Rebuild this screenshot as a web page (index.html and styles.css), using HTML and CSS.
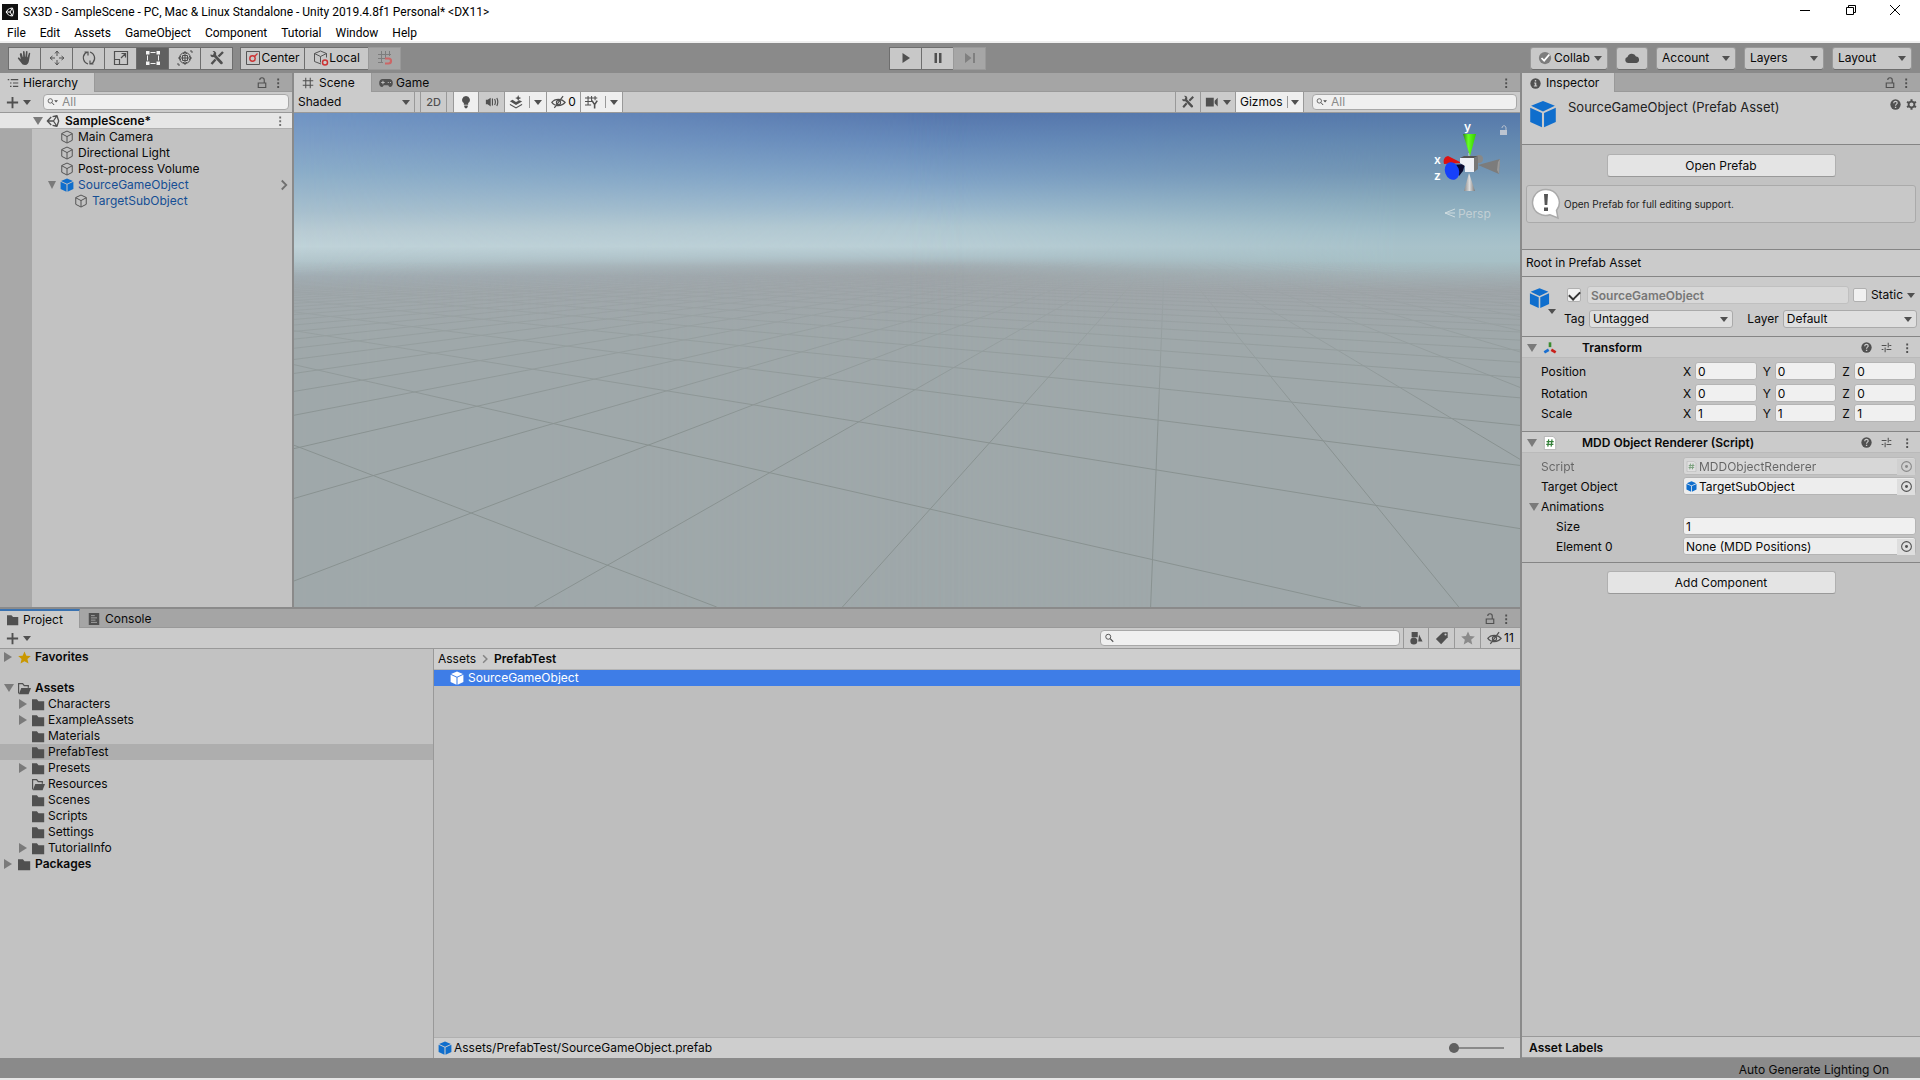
FILE: index.html
```html
<!DOCTYPE html>
<html lang="en">
<head>
<meta charset="utf-8">
<title>SX3D - SampleScene</title>
<link rel="stylesheet" href="styles.css">
</head>
<body>
<svg class="defs" aria-hidden="true">
  <symbol id="unity" viewBox="0 0 16 16"><path d="M6 3.500L1.500 8 6 12.500M1.500 8h7l4-6-5 1M12.500 2l2 6-2 6M8.500 8l4 6-5-1" fill="none" stroke="currentColor" stroke-width="1.500" stroke-linejoin="round"/></symbol>
  <symbol id="hand" viewBox="0 0 16 16"><path d="M3.500 3.200c.8-.3 1.200.2 1.400.9L5.800 7h.4L6 1.800c0-1 1.500-1 1.600 0L8 6.800h.4L9 1.600c.1-1 1.600-.8 1.500.2L10.200 7.200h.4l1.200-4c.3-1 1.700-.5 1.400.4L12 10.500c-.5 2.800-1.500 4.500-4 4.500-2 0-3-.8-4-2.500L1 8.700c-.5-1 .6-1.600 1.300-1l1.500 1.600L2.800 4.400c-.1-.6.2-1 .7-1.200z" fill="currentColor"/></symbol>
  <symbol id="move" viewBox="0 0 16 16"><path d="M8 2v4M8 10v4M2 8h4M10 8h4M6 3.500L8 1l2 2.500M6 12.500L8 15l2-2.500M3.500 6L1 8l2.500 2M12.500 6L15 8l-2.500 2" fill="none" stroke="currentColor"/></symbol>
  <symbol id="rotate" viewBox="0 0 16 16"><path d="M7 14A6.500 6.500 0 0 1 4 3.500L6.500 2M3.500 2H7v3.500M9 2a6.500 6.500 0 0 1 3 10.500L9.500 14M12.500 14H9v-3.500" fill="none" stroke="currentColor" stroke-width="1.200"/></symbol>
  <symbol id="scale" viewBox="0 0 16 16"><path d="M1.500 1.500h13v13h-13zM1.500 9.500h5v5M8 8l4-4M8.500 3.500h4v4" fill="none" stroke="currentColor" stroke-width="1.200"/></symbol>
  <symbol id="rect" viewBox="0 0 16 16"><path d="M5.500 2.500h5M5.500 13.500h5M2.500 5.500v5M13.500 5.500v5" stroke="currentColor" fill="none"/><path d="M1 1h3.500v3.500H1zM11.500 1H15v3.500h-3.500zM1 11.500h3.500V15H1zM11.500 11.500H15V15h-3.500z" fill="currentColor"/></symbol>
  <symbol id="transform-tool" viewBox="0 0 16 16"><circle cx="8" cy="8" r="5.500" fill="none" stroke="currentColor"/><path d="M8 1v14M1 8h14M6 4l2-2 2 2M6 12l2 2 2-2M4 6L2 8l2 2M12 6l2 2-2 2M5.500 5.500h5v5h-5zM1 13v2h2M13 1h2v2" fill="none" stroke="currentColor"/></symbol>
  <symbol id="tools" viewBox="0 0 16 16"><path d="M14 2L9.500 6.500M6.500 9.500L2.500 14" stroke="currentColor" stroke-width="2.400"/><path d="M1.500 4.500L4 5l1-2.500L3.500 1C6 .5 8 2.500 7 5l6.500 7c1 1.500-.5 3-2 2L5 7C3 7.500 1 6.500 1.500 4.500z" fill="currentColor"/></symbol>
  <symbol id="center" viewBox="0 0 16 16"><path d="M1.500 1.500h13v13h-13z" fill="none" stroke="#555"/><circle cx="7.500" cy="8.500" r="2.700" fill="none" stroke="#c33" stroke-width="1.400"/><path d="M9.500 6.500l3-3" stroke="#c33" stroke-width="1.200"/></symbol>
  <symbol id="local" viewBox="0 0 16 16"><path d="M8 14L1.500 11.500v-8L7.500 1l6 2.500v4M1.500 3.500l6 3 6-3M7.500 6.500v6" fill="none" stroke="#555"/><circle cx="12" cy="12.500" r="2.500" fill="#ccc" stroke="#c33" stroke-width="1.500"/></symbol>
  <symbol id="snap" viewBox="0 0 16 16"><path d="M4.500 1v12M8.500 1v7M12.500 1v5M1 4.500h13M1 8.500h7M1 12.500h5" fill="none" stroke="#7d7d7d"/><path d="M8 8.500h3.500a2.500 2.500 0 0 1 0 5H8" fill="none" stroke="#c66" stroke-width="2.200"/></symbol>
  <symbol id="play" viewBox="0 0 16 16"><path d="M4.500 3l7.500 5-7.500 5z" fill="currentColor"/></symbol>
  <symbol id="pause" viewBox="0 0 16 16"><path d="M4.500 3h2.500v10H4.500zM9 3h2.500v10H9z" fill="currentColor"/></symbol>
  <symbol id="step" viewBox="0 0 16 16"><path d="M3 3l6.500 5L3 13zM11 3h2v10h-2z" fill="currentColor"/></symbol>
  <symbol id="check-circle" viewBox="0 0 16 16"><circle cx="8" cy="8" r="7" fill="#7d7d7d"/><path d="M4 8l3 3 6-7" fill="none" stroke="#fff" stroke-width="2"/></symbol>
  <symbol id="cloud" viewBox="0 0 16 16"><path d="M4 13a3 3 0 0 1-.5-5.900A4.500 4.500 0 0 1 12 6.500a3.300 3.300 0 0 1 .5 6.500z" fill="currentColor"/></symbol>
  <symbol id="list" viewBox="0 0 16 16"><path d="M1 3.500h2M5 3.500h10M4 8h2M8 8h7M4 12.500h2M8 12.500h7" stroke="currentColor" stroke-width="1.500"/></symbol>
  <symbol id="lock" viewBox="0 0 16 16"><path d="M3 8h10v6H3zM5 4a3 3 0 0 1 6 0v4" fill="none" stroke="currentColor" stroke-width="1.500"/></symbol>
  <symbol id="kebab" viewBox="0 0 16 16"><path d="M7 2h2.500v2.500H7zM7 7h2.500v2.500H7zM7 12h2.500v2.500H7z" fill="currentColor"/></symbol>
  <symbol id="hash" viewBox="0 0 16 16"><path d="M5 1v14M11 1v14M1 5h14M1 11h14" stroke="currentColor" stroke-width="1.400"/></symbol>
  <symbol id="gamepad" viewBox="0 0 16 16"><path d="M4 3.500h8c2 0 3.800 1.500 3.800 4.500s-1.500 4.500-3.300 4.500c-1 0-1.500-1.500-2-2h-5c-.5.500-1 2-2 2-1.800 0-3.300-1.500-3.300-4.500S2 3.500 4 3.500z" fill="currentColor"/><path d="M2.500 7.500h4M4.500 5.500v4M10 7.500h1.200M12.500 7.500h1.200" stroke="#bbb" stroke-width="1.200"/></symbol>
  <symbol id="plus" viewBox="0 0 16 16"><path d="M8 2v12M2 8h12" stroke="currentColor" stroke-width="2"/></symbol>
  <symbol id="search" viewBox="0 0 16 16"><circle cx="6" cy="6" r="4" fill="none" stroke="currentColor" stroke-width="1.500"/><path d="M9 9l5 5" stroke="currentColor" stroke-width="1.800"/></symbol>
  <symbol id="search-menu" viewBox="0 0 20 16"><circle cx="6" cy="6" r="4" fill="none" stroke="currentColor" stroke-width="1.500"/><path d="M9 9l4 4.500" stroke="currentColor" stroke-width="1.800"/><path d="M13 5h7l-3.500 4z" fill="currentColor"/></symbol>
  <symbol id="cube-line" viewBox="0 0 16 16"><path d="M8 1.200L14 4v7.800L8 14.900 2 11.800V4zM2 4.300l6 3.200 6-3.200M8 7.500v7" fill="none" stroke="#505050" stroke-width="1.100" stroke-linejoin="round"/></symbol>
  <symbol id="cube" viewBox="0 0 16 16"><path d="M8 .5l6.800 2.800L8 6.500 1.200 3.300zM.7 4.400l6.700 3v8.200L.7 12.500zM15.300 4.400l-6.700 3v8.200l6.700-3.100z" fill="currentColor"/></symbol>
  <symbol id="bulb" viewBox="0 0 16 16"><path d="M8 1a4.500 4.500 0 0 1 2.500 8.200V11h-5V9.200A4.500 4.500 0 0 1 8 1zM6 12h4v1.500L9 15H7l-1-1.500z" fill="currentColor"/></symbol>
  <symbol id="audio" viewBox="0 0 16 16"><path d="M1 5.500h2L6.500 3v10L3 10.500H1z" fill="currentColor"/><path d="M8.500 4v8M11 4.500c1 2 1 5 0 7M13.500 3.500c1.500 3 1.500 6 0 9" fill="none" stroke="currentColor" stroke-width="1.300"/></symbol>
  <symbol id="fx" viewBox="0 0 16 16"><path d="M1 7l3-1.500L8 8l4-2 3 1.500-7 4zM1 10l7 4 7-4v1.500L8 15.500 1 11.500z" fill="currentColor"/><path d="M10.500 0l1 2.500L14 3.500l-2.500 1-1 2.500-1-2.500L7 3.500l2.500-1z" fill="currentColor"/></symbol>
  <symbol id="eye-off" viewBox="0 0 18 16"><path d="M1 8.500c3.500-5 12-5 16 0-4 5-12.500 5-16 0zM14.500 1L4 15" fill="none" stroke="currentColor" stroke-width="1.500"/><circle cx="9" cy="8.500" r="2.500" fill="none" stroke="currentColor" stroke-width="1.400"/></symbol>
  <symbol id="grid-y" viewBox="0 0 16 16"><path d="M3.500 1v11M7.500 1v7M11.500 1v5M0 3.500h14M0 7.500h8M0 11.500h7" fill="none" stroke="currentColor" stroke-width="1.200"/><path d="M8 6.500l3 4.500 3-4.500M11 11v4.500" fill="none" stroke="currentColor" stroke-width="1.800"/></symbol>
  <symbol id="camera" viewBox="0 0 16 16"><path d="M1 3h9v10H1zM11 6.500l3.500-3.500v10L11 9.500z" fill="currentColor"/></symbol>
  <symbol id="info" viewBox="0 0 16 16"><circle cx="8" cy="8" r="7.500" fill="currentColor"/><path d="M7 3h2v2H7zM6 6.500h3.200v4.500H10.500v1.500h-5V11H7V8H6z" fill="#cbcbcb"/></symbol>
  <symbol id="help" viewBox="0 0 16 16"><circle cx="8" cy="8" r="7.500" fill="currentColor"/><path d="M5.500 6c0-3.500 5-3 5-.3 0 1.800-2.400 1.800-2.400 4M7.100 12.200h2" fill="none" stroke="#cbcbcb" stroke-width="1.700"/></symbol>
  <symbol id="gear" viewBox="0 0 16 16"><circle cx="8" cy="8" r="4.200" fill="none" stroke="currentColor" stroke-width="2.600"/><path d="M8 .5v3M8 12.500v3M1.500 4.200l2.600 1.500M11.900 10.300l2.600 1.500M1.500 11.800l2.600-1.500M11.900 5.700l2.600-1.500" stroke="currentColor" stroke-width="3"/></symbol>
  <symbol id="preset" viewBox="0 0 16 16"><path d="M1 5h7M12 5h3M10.500 1v7M1 11h2.500M8 11h7M6 8v7" stroke="currentColor" stroke-width="1.500"/></symbol>
  <symbol id="axes" viewBox="0 0 16 16"><path d="M8 7V1.500" stroke="#3a8a2e" stroke-width="3"/><path d="M6.500 10L1.500 13" stroke="#1a6fd0" stroke-width="3"/><path d="M9.500 10l5 3" stroke="#c8201a" stroke-width="3"/></symbol>
  <symbol id="script" viewBox="0 0 16 16"><path d="M1.500.5h10l3 3v12h-13z" fill="#fff" stroke="#b0b0b0"/><path d="M6.500 3.800l-1 8.400M10.300 3.800l-1 8.400M4 6.500h8.200M3.700 9.500h8.200" stroke="#35803a" stroke-width="1.400"/></symbol>
  <symbol id="picker" viewBox="0 0 16 16"><circle cx="8" cy="8" r="6" fill="none" stroke="currentColor" stroke-width="1.300"/><circle cx="8" cy="8" r="1.800" fill="currentColor"/></symbol>
  <symbol id="folder" viewBox="0 0 16 16"><path d="M0 1.500h6l2 2.500h7V15H0z" fill="currentColor"/></symbol>
  <symbol id="folder-open" viewBox="0 0 16 16"><path d="M.7 14V2h5l2 2.500h5V7" fill="none" stroke="currentColor" stroke-width="1.500"/><path d="M4 7.500h12L13 15H1z" fill="currentColor"/></symbol>
  <symbol id="console" viewBox="0 0 16 16"><path d="M1 0h14v16H1z" fill="currentColor"/><path d="M4 3.500h5M4 6.500h8M4 9.500h6M4 12.500h8" stroke="#bbb"/></symbol>
  <symbol id="star" viewBox="0 0 16 16"><path d="M8 .5l2.300 5.200 5.500.5-4.200 3.700 1.300 5.600L8 12.500l-4.900 3 1.300-5.600L.2 6.200l5.500-.5z" fill="currentColor"/></symbol>
  <symbol id="shapes" viewBox="0 0 16 16"><path d="M3 1h7v6H3zM11.500 4l4 8h-5z" fill="currentColor"/><circle cx="5.500" cy="11.500" r="4" fill="currentColor"/></symbol>
  <symbol id="tag" viewBox="0 0 16 16"><path d="M9 1.500h5.500V7L7 15 1 9z" fill="currentColor"/><circle cx="12" cy="4" r="1.200" fill="#ccc"/></symbol>
  <symbol id="chevron" viewBox="0 0 16 16"><path d="M5 2l6 6-6 6" fill="none" stroke="currentColor" stroke-width="2.400"/></symbol>
</svg>

<header class="titlebar">
  <svg class="app-icon" viewBox="0 0 16 16"><path d="M0 0h16v16H0z" fill="#111"/><path d="M7 4.500L4 8l3 3.500M4 8h4l2.500-4-3 .5M10.500 4l1 4-1 4M8 8l2.500 4-3-.5" fill="none" stroke="#fff"/></svg>
  <h1>SX3D - SampleScene - PC, Mac &amp; Linux Standalone - Unity 2019.4.8f1 Personal* &lt;DX11&gt;</h1>
  <div class="window-buttons">
    <button aria-label="Minimize"><svg viewBox="0 0 12 12"><path d="M1 6.500h10" stroke="#000"/></svg></button>
    <button aria-label="Restore"><svg viewBox="0 0 12 12"><path d="M1.500 3.500h7v7h-7zM3.500 3V1.500h7v7H9" fill="none" stroke="#000"/></svg></button>
    <button aria-label="Close"><svg viewBox="0 0 12 12"><path d="M1 1l10 10M11 1L1 11" stroke="#000"/></svg></button>
  </div>
</header>
<nav class="menubar"><button>File</button><button>Edit</button><button>Assets</button><button>GameObject</button><button>Component</button><button>Tutorial</button><button>Window</button><button>Help</button></nav>

<div class="toolbar">
  <div class="toolbar-side">
    <div class="group">
      <button aria-label="Hand"><svg><use href="#hand"/></svg></button><button aria-label="Move"><svg><use href="#move"/></svg></button><button aria-label="Rotate"><svg><use href="#rotate"/></svg></button><button aria-label="Scale"><svg><use href="#scale"/></svg></button><button class="active" aria-label="Rect"><svg><use href="#rect"/></svg></button><button aria-label="Transform"><svg><use href="#transform-tool"/></svg></button><button aria-label="Custom tools"><svg><use href="#tools"/></svg></button>
    </div>
    <div class="group pivots">
      <button><svg><use href="#center"/></svg>Center</button><button><svg><use href="#local"/></svg>Local</button><button class="dim" disabled aria-label="Snap"><svg><use href="#snap"/></svg></button>
    </div>
  </div>
  <div class="group"><button aria-label="Play"><svg><use href="#play"/></svg></button><button aria-label="Pause"><svg><use href="#pause"/></svg></button><button class="dim" disabled aria-label="Step"><svg><use href="#step"/></svg></button></div>
  <div class="toolbar-side right">
    <button class="drop collab"><svg><use href="#check-circle"/></svg>Collab<i class="down"></i></button>
    <button class="drop services" aria-label="Services"><svg><use href="#cloud"/></svg></button>
    <button class="drop">Account<i class="down"></i></button>
    <button class="drop">Layers<i class="down"></i></button>
    <button class="drop">Layout<i class="down"></i></button>
  </div>
</div>

<main class="workspace">
  <div class="left">
    <div class="upper">
      <section class="panel">
        <div class="tabs"><button class="tab on hierarchy-tab"><svg><use href="#list"/></svg>Hierarchy</button><span class="tab-tools"><svg><use href="#lock"/></svg><svg><use href="#kebab"/></svg></span></div>
        <div class="bar"><button class="add" aria-label="Create"><svg><use href="#plus"/></svg><i class="down"></i></button><label class="search"><svg><use href="#search-menu"/></svg><input type="search" placeholder="All" aria-label="Search hierarchy"></label></div>
        <div class="scene-row"><i class="open"></i><svg><use href="#unity"/></svg><b>SampleScene*</b><svg class="end"><use href="#kebab"/></svg></div>
        <ul class="hierarchy">
          <li><i></i><svg><use href="#cube-line"/></svg>Main Camera</li>
          <li><i></i><svg><use href="#cube-line"/></svg>Directional Light</li>
          <li><i></i><svg><use href="#cube-line"/></svg>Post-process Volume</li>
          <li class="prefab"><i class="open"></i><svg class="blue"><use href="#cube"/></svg>SourceGameObject<svg class="end"><use href="#chevron"/></svg></li>
          <li class="prefab child"><i></i><svg><use href="#cube-line"/></svg>TargetSubObject</li>
        </ul>
      </section>
      <section class="panel">
        <div class="tabs"><button class="tab on scene-tab"><svg><use href="#hash"/></svg>Scene</button><button class="tab game-tab"><svg><use href="#gamepad"/></svg>Game</button><span class="tab-tools"><svg><use href="#kebab"/></svg></span></div>
        <div class="bar scene-bar">
          <button class="cell shading">Shaded<i class="down"></i></button>
          <button class="cell two-d">2D</button>
          <button class="cell lit bulb" aria-label="Lighting"><svg><use href="#bulb"/></svg></button><button class="cell" aria-label="Audio"><svg><use href="#audio"/></svg></button><button class="cell lit split" aria-label="Effects"><svg><use href="#fx"/></svg><i class="down"></i></button><button class="cell lit hidden-count"><svg><use href="#eye-off"/></svg>0</button><button class="cell lit split" aria-label="Grid"><svg><use href="#grid-y"/></svg><i class="down"></i></button>
          <span class="space"></span>
          <button class="cell edge" aria-label="Tools"><svg><use href="#tools"/></svg></button><button class="cell cam" aria-label="Camera"><svg><use href="#camera"/></svg><i class="down"></i></button><button class="cell lit split gizmos">Gizmos<i class="down"></i></button>
          <label class="search"><svg><use href="#search-menu"/></svg><input type="search" placeholder="All" aria-label="Search scene"></label>
        </div>
        <div class="viewport">
          <svg class="ground" viewBox="0 0 1226 494" preserveAspectRatio="none">
            <defs>
              <linearGradient id="fade" x1="0" y1="0" x2="0" y2="1"><stop offset=".3" stop-color="#000"/><stop offset=".38" stop-color="#333"/><stop offset=".5" stop-color="#888"/><stop offset=".65" stop-color="#fff"/></linearGradient>
              <mask id="far" maskUnits="userSpaceOnUse" x="0" y="0" width="1226" height="494"><rect width="1226" height="494" fill="url(#fade)"/></mask>
            </defs>
            <path id="grid-lines" mask="url(#far)" fill="none" stroke="#899291"/>
          </svg>
          <svg class="gizmo" viewBox="1430 118 90 104">
            <defs>
              <linearGradient id="green"><stop stop-color="#2a8a10"/><stop offset=".4" stop-color="#6f2"/><stop offset="1" stop-color="#3c0"/></linearGradient>
              <linearGradient id="grey"><stop stop-color="#888"/><stop offset=".5" stop-color="#ddd"/><stop offset="1" stop-color="#777"/></linearGradient>
            </defs>
            <circle cx="1479" cy="159" r="4" fill="#888"/>
            <path d="M1469 157v-4" stroke="#ddd"/>
            <path d="M1463 134h13l-6 22z" fill="url(#green)"/>
            <path d="M1478 165l22-6-1 15z" fill="#7c7c7c"/><path d="M1500 159l-1 15-2-4 1-8z" fill="#999"/>
            <path d="M1469 173l6 18h-11z" fill="url(#grey)"/>
            <path d="M1462 163l-14-7c-4 1-5 4-4 8z" fill="#d11"/>
            <path d="M1465 164l-13 1 7 11 4-5z" fill="#0a0a30"/>
            <path d="M1460 158l4-2h14l-4 2z" fill="#555"/><path d="M1460 158h14v14h-9v-6l-5-3z" fill="#eef0f6"/><path d="M1474 158l4-2v13l-4 3z" fill="#777"/>
            <ellipse cx="1452" cy="171" rx="7" ry="9" transform="rotate(-20 1452 171)" fill="#1640fa"/>
            <g fill="#fff" font-family="Inter, sans-serif" font-size="12" font-weight="600"><text x="1464" y="131">y</text><text x="1434" y="164">x</text><text x="1434" y="180">z</text></g>
            <path d="M1500 130h7v5h-7z" fill="#bcc4d0"/><path d="M1502 128c0-3 4-3 4 0v2" fill="none" stroke="#bcc4d0"/>
            <path d="M1455 209l-10 4 10 4M1445 213h10" fill="none" stroke="#cfdce0"/>
            <text x="1458" y="218" fill="#c2cfd4" font-family="Inter, sans-serif" font-size="12">Persp</text>
          </svg>
        </div>
      </section>
    </div>

    <section class="panel project">
      <div class="tabs"><button class="tab on focus project-tab"><svg><use href="#folder"/></svg>Project</button><button class="tab"><svg><use href="#console"/></svg>Console</button><span class="tab-tools"><svg><use href="#lock"/></svg><svg><use href="#kebab"/></svg></span></div>
      <div class="bar">
        <button class="add" aria-label="Create asset"><svg><use href="#plus"/></svg><i class="down"></i></button>
        <span class="space"></span>
        <label class="search"><svg><use href="#search"/></svg><input type="search" aria-label="Search project"></label>
        <button class="cell edge" aria-label="By type"><svg><use href="#shapes"/></svg></button><button class="cell" aria-label="By label"><svg><use href="#tag"/></svg></button><button class="cell pale" aria-label="Save search"><svg><use href="#star"/></svg></button><button class="cell last"><svg><use href="#eye-off"/></svg>11</button>
      </div>
      <div class="browser">
        <ul class="tree">
          <li class="root first"><i class="shut"></i><svg class="gold"><use href="#star"/></svg>Favorites</li>
          <li class="root"><i class="open"></i><svg><use href="#folder-open"/></svg>Assets</li>
          <li><i class="shut"></i><svg><use href="#folder"/></svg>Characters</li>
          <li><i class="shut"></i><svg><use href="#folder"/></svg>ExampleAssets</li>
          <li><i></i><svg><use href="#folder"/></svg>Materials</li>
          <li class="selected"><i></i><svg><use href="#folder"/></svg>PrefabTest</li>
          <li><i class="shut"></i><svg><use href="#folder"/></svg>Presets</li>
          <li><i></i><svg><use href="#folder-open"/></svg>Resources</li>
          <li><i></i><svg><use href="#folder"/></svg>Scenes</li>
          <li><i></i><svg><use href="#folder"/></svg>Scripts</li>
          <li><i></i><svg><use href="#folder"/></svg>Settings</li>
          <li><i class="shut"></i><svg><use href="#folder"/></svg>TutorialInfo</li>
          <li class="root"><i class="shut"></i><svg><use href="#folder"/></svg>Packages</li>
        </ul>
        <div class="files">
          <nav class="crumbs"><a href="#assets">Assets</a><svg><use href="#chevron"/></svg><b>PrefabTest</b></nav>
          <div class="file"><svg><use href="#cube"/></svg>SourceGameObject</div>
          <div class="path"><svg class="blue"><use href="#cube"/></svg><span>Assets/PrefabTest/SourceGameObject.prefab</span><input type="range" min="0" max="100" value="0" aria-label="Icon size"></div>
        </div>
      </div>
    </section>
  </div>

  <aside class="panel inspector">
    <div class="tabs"><button class="tab on inspector-tab"><svg><use href="#info"/></svg>Inspector</button><span class="tab-tools"><svg><use href="#lock"/></svg><svg><use href="#kebab"/></svg></span></div>
    <div class="asset-head"><svg class="big blue"><use href="#cube"/></svg><h2>SourceGameObject (Prefab Asset)</h2><svg><use href="#help"/></svg><svg><use href="#gear"/></svg></div>
    <div class="open-area">
      <button class="wide">Open Prefab</button>
      <p class="help-box"><svg viewBox="0 0 32 32"><path d="M15 1.500a13 13 0 0 1 10.500 21L27 30l-8-3.300A13 13 0 1 1 15 1.500z" fill="#fff" stroke="#aaa" stroke-width="1.500"/><path d="M13 6h4l-.7 11h-2.600zM13 19.500h4V23h-4z" fill="#555"/></svg>Open Prefab for full editing support.</p>
    </div>
    <div class="root-line">Root in Prefab Asset</div>
    <div class="object-head">
      <div class="object-icon"><svg class="blue"><use href="#cube"/></svg><i class="down"></i></div>
      <div class="object-fields">
        <div class="name-row"><input type="checkbox" checked aria-label="Active"><input class="name" type="text" value="SourceGameObject" disabled aria-label="Name"><input type="checkbox" id="static"><label for="static">Static</label><i class="down"></i></div>
        <div class="tag-row"><label for="tag">Tag</label><span class="select tag-select"><select id="tag"><option>Untagged</option></select></span><label for="layer" class="layer-label">Layer</label><span class="select"><select id="layer"><option>Default</option></select></span></div>
      </div>
    </div>
    <div class="component-head"><i class="open"></i><svg class="component-icon"><use href="#axes"/></svg><b>Transform</b><svg><use href="#help"/></svg><svg><use href="#preset"/></svg><svg><use href="#kebab"/></svg></div>
    <div class="fields transform">
      <div class="row"><span>Position</span><div class="vector"><label for="px">X</label><input id="px" value="0"><label for="py">Y</label><input id="py" value="0"><label for="pz">Z</label><input id="pz" value="0"></div></div>
      <div class="row rotation"><span>Rotation</span><div class="vector"><label for="rx">X</label><input id="rx" value="0"><label for="ry">Y</label><input id="ry" value="0"><label for="rz">Z</label><input id="rz" value="0"></div></div>
      <div class="row"><span>Scale</span><div class="vector"><label for="sx">X</label><input id="sx" value="1"><label for="sy">Y</label><input id="sy" value="1"><label for="sz">Z</label><input id="sz" value="1"></div></div>
    </div>
    <div class="component-head"><i class="open"></i><svg class="component-icon"><use href="#script"/></svg><b>MDD Object Renderer (Script)</b><svg><use href="#help"/></svg><svg><use href="#preset"/></svg><svg><use href="#kebab"/></svg></div>
    <div class="fields renderer">
      <div class="row off"><span>Script</span><div class="object"><svg><use href="#script"/></svg>MDDObjectRenderer<button disabled aria-label="Pick script"><svg><use href="#picker"/></svg></button></div></div>
      <div class="row"><span>Target Object</span><div class="object"><svg class="blue"><use href="#cube"/></svg>TargetSubObject<button aria-label="Pick target"><svg><use href="#picker"/></svg></button></div></div>
      <div class="row fold"><span><i class="open"></i>Animations</span></div>
      <div class="row inner"><label for="size">Size</label><input id="size" value="1"></div>
      <div class="row inner"><span>Element 0</span><div class="object">None (MDD Positions)<button aria-label="Pick element"><svg><use href="#picker"/></svg></button></div></div>
    </div>
    <div class="add-area"><button class="wide">Add Component</button></div>
    <div class="labels">Asset Labels</div>
  </aside>
</main>
<footer class="status">Auto Generate Lighting On</footer>
<div class="desktop-edge"></div>
<script src="grid.js"></script>
</body>
</html>
```
FILE: grid.js
```js
// Ground grid: two families of parallel lines, each meeting at its own point on the horizon.
const horizon = 134, bottom = 494;
const families = [
  { x: 871, start: -0.04, step: 0.856, from: -40, to: 40 },
  { x: -518, start: 2.613, step: 1.79, from: -1, to: 34 }
];
let d = "";
for (const f of families) {
  for (let k = f.from; k <= f.to; k++) {
    const slope = f.start + f.step * k;
    d += `M${f.x} ${horizon}L${(f.x + slope * (bottom - horizon)).toFixed(1)} ${bottom}`;
  }
}
document.getElementById("grid-lines").setAttribute("d", d);
```
FILE: styles.css
```css
* { box-sizing: border-box; }
body { margin: 0; height: 100vh; display: flex; flex-direction: column; overflow: hidden; background: #8a8a8a; color: #090909; font: 12px/16px Inter, sans-serif; }
button, input, select { font: inherit; color: inherit; margin: 0; padding: 0; border: 0; background: none; border-radius: 0; }
input { min-width: 0; outline: 0; }
svg { width: 14px; height: 14px; flex: none; color: #505050; }
ul { margin: 0; padding: 0; list-style: none; }
h1, h2, p { margin: 0; font-weight: 400; }
b { font-weight: 600; }
.defs { display: none; }
.space { flex: 1; }
svg.blue { color: #0f6ecd; }
svg.gold { color: #c99700; }
.down { flex: none; border: 4px solid transparent; border-top: 5px solid #505050; border-bottom: 0; }
.open, .shut { flex: none; border: 5px solid transparent; }
.open { border-top: 8px solid #7a7a7a; border-bottom: 0; }
.shut { border-left: 8px solid #7a7a7a; border-right: 0; }

.titlebar { flex: none; display: flex; align-items: center; height: 23px; background: #fff; padding-left: 2px; gap: 5px; }
.titlebar h1 { flex: 1; font: 12px/16px Roboto, sans-serif; color: #000; }
.app-icon { width: 16px; height: 16px; }
.window-buttons { display: flex; }
.window-buttons button { width: 46px; height: 20px; }
.window-buttons button:last-child { padding-right: 4px; }
.window-buttons svg { width: 12px; height: 12px; }
.menubar { flex: none; display: flex; gap: 14px; height: 20px; padding-left: 7px; background: #fff; border-bottom: 2px solid #f0f0f0; font: 12px/20px Roboto, sans-serif; color: #000; }

.toolbar { flex: none; height: 30px; padding: 0 9px; display: grid; grid-template-columns: minmax(0, 881fr) auto minmax(0, 926fr); align-items: center; background: #8a8a8a; }
.toolbar-side { display: flex; gap: 9px; }
.toolbar-side.right { justify-content: flex-end; gap: 10px; }
.group { display: flex; gap: 1px; }
.group button { width: 31px; height: 21px; display: flex; align-items: center; justify-content: center; background: #c8c8c8; box-shadow: 0 0 0 1px #6e6e6e; }
.group svg { width: 16px; height: 16px; }
.group .active { background: #606060; }
.group .active svg { color: #f4f4f4; }
.group .dim { background: #a6a6a6; box-shadow: 0 0 0 1px #999; }
.group .dim svg { color: #808080; }
.pivots button { width: 63px; }
.pivots .dim { width: 31px; }
.drop { height: 21px; width: 78px; padding: 0 5px; display: flex; align-items: center; justify-content: space-between; background: #c8c8c8; border-radius: 2px; box-shadow: 0 1px 0 #6e6e6e, 0 0 0 1px #999; }
.collab { width: 76px; }
.collab svg { margin: 0 -2px 0 2px; }
.services { width: 30px; justify-content: center; }
.services svg { width: 16px; height: 16px; }

.workspace { flex: 1; min-height: 0; display: grid; grid-template-columns: minmax(0, 1520fr) minmax(0, 398fr); gap: 2px; }
.left { min-height: 0; display: grid; grid-template-rows: minmax(0, 534fr) minmax(0, 449fr); gap: 2px; }
.upper { display: grid; grid-template-columns: minmax(0, 292fr) minmax(0, 1226fr); gap: 2px; min-height: 0; }
.panel { display: flex; flex-direction: column; min-width: 0; min-height: 0; background: #c2c2c2; }
.tabs { flex: none; display: flex; height: 19px; background: #a5a5a5; box-shadow: inset 0 -1px #999; }
.tab { display: flex; align-items: center; gap: 5px; padding: 1px 8px 0; }
.tab svg { width: 12px; height: 12px; }
.tab.on { background: #cbcbcb; border-right: 1px solid #999; }
.tab.focus { border-top: 2px solid #3a72b0; padding-top: 0; }
.hierarchy-tab { width: 95px; gap: 4px; padding: 1px 7px 0; }
.scene-tab { width: 78px; gap: 5px; }
.game-tab { gap: 3px; padding: 1px 7px 0; }
.game-tab svg { width: 14px; height: 14px; }
.project-tab { width: 80px; padding: 0 7px; gap: 4px; }
.inspector-tab { width: 93px; gap: 5px; }
.inspector-tab svg { width: 11px; height: 11px; }
.tab-tools { margin-left: auto; display: flex; align-items: center; gap: 4px; padding-right: 8px; }
.tab-tools svg { width: 12px; height: 12px; }
.bar { flex: none; display: flex; align-items: center; height: 21px; background: #cbcbcb; border-bottom: 1px solid #999; }
.add { display: flex; align-items: center; width: 43px; padding-left: 5px; gap: 3px; }
.add svg { width: 15px; height: 15px; }
.search { flex: 1; min-width: 0; display: flex; align-items: center; height: 16px; margin-right: 3px; padding-left: 3px; border: 1px solid #a8a8a8; border-radius: 4px; background: #f0f0f0; gap: 4px; }
.search svg { width: 11px; height: 10px; }
.search input { flex: 1; height: 14px; line-height: 14px; }
.search input::placeholder { color: #8a8a8a; opacity: 1; }
.cell { flex: none; width: 26px; height: 20px; display: flex; align-items: center; justify-content: center; border-right: 1px solid #999; }
.lit { background: #efefef; }
.edge { border-left: 1px solid #999; }
.pale svg { color: #8a8a8a; }
.shading { width: 121px; padding: 0 4px; justify-content: space-between; }
.two-d { width: 27px; margin: 0 6px 0 5px; border-left: 1px solid #999; color: #505050; font-size: 11px; font-weight: 500; }
.bulb { border-left: 1px solid #999; }
.split { width: 42px; justify-content: space-between; padding: 0 4px; }
.split::before { content: ""; order: 1; height: 12px; border-left: 1px solid #999; margin-left: 2px; }
.split .down { order: 2; }
.hidden-count { width: 34px; }
.hidden-count svg, .last svg { width: 15px; }
.hidden-count svg { margin-right: 2px; }
.cam { width: 35px; gap: 4px; }
.gizmos { width: 68px; padding: 0 4px; }
.scene-bar .search { flex: 0 1 205px; margin-left: 8px; margin-right: 3px; }

.scene-row { flex: none; display: flex; align-items: center; height: 16px; padding: 0 6px 0 33px; background: #e6e6e6; border-bottom: 1px solid #b0b0b0; }
.scene-row svg { margin-left: 3px; margin-right: 5px; }
svg.end { margin: 0 0 0 auto; width: 12px; height: 12px; color: #707070; }
.scene-row .end { margin: 0 0 0 auto; }
.hierarchy { flex: 1; padding-left: 32px; background: linear-gradient(90deg, #a8a8a8 32px, transparent 32px); }
.hierarchy li { display: flex; align-items: center; height: 16px; padding: 0 2px 0 16px; gap: 4px; }
.hierarchy i { width: 8px; border-left-width: 4px; border-right-width: 4px; }
.hierarchy .child { padding-left: 30px; }
.prefab { color: #154e94; }

/* The sky is three vertical ramps (left, middle, right) blended across the view. */
.viewport { flex: 1; min-height: 0; position: relative; overflow: hidden; background: linear-gradient(#5676ad 0, #6387b9 5%, #7094c0 9%, #82a5c8 14%, #9ab8ce 19%, #b0c8d2 23%, #bacfd6 27%, #afc3ca 29%, #a4aeb3 31%, #a0a6aa 33%, #9fa8aa 45%); }
.viewport::before, .viewport::after { content: ""; position: absolute; inset: 0; }
.viewport::before { background: linear-gradient(#7094c3 0, #7d9fc6 6%, #8badc8 12%, #a7bfcd 20%, #b8cbd3 24%, #bfd2d8 27%, #b2c5cb 30%, #a3afb6 33%, #a0a8ac 36%, #9fa8aa 45%); mask-image: linear-gradient(90deg, #000, #0000 55%); }
.viewport::after { background: linear-gradient(#5579ab 0, #6489b0 6%, #7396b4 12%, #8aabbd 18%, #a0bdc8 24%, #a8c2ca 27%, #a7c0c6 30%, #a4b2b7 33%, #a0a6aa 36%, #9fa8aa 45%); mask-image: linear-gradient(90deg, #0000 50%, #000 90%); }
.ground { display: block; position: relative; z-index: 1; width: 100%; height: 100%; }
.gizmo { position: absolute; z-index: 1; top: 5px; right: 0; width: 90px; height: 104px; }

.project .search { flex: 0 1 300px; }
.last { width: 39px; border-right: 0; gap: 2px; }
.browser { flex: 1; min-height: 0; display: grid; grid-template-columns: minmax(0, 433fr) minmax(0, 1087fr); }
.tree li { display: flex; align-items: center; height: 16px; padding-left: 19px; gap: 3px; }
.tree i { width: 10px; }
.tree i.shut { width: 8px; margin-right: 2px; }
.tree i.open { width: 10px; }
.tree .root { font-weight: 600; padding-left: 5px; gap: 4px; }
.tree .root i { margin-left: -1px; }
.tree .first { margin-bottom: 15px; }
.tree .selected { background: #aeaeae; }
.tree svg { width: 13px; height: 13px; }
.files { display: flex; flex-direction: column; background: #bebebe; border-left: 1px solid #999; }
.crumbs { display: flex; align-items: center; height: 21px; padding-left: 4px; background: #cecece; border-bottom: 1px solid #b4b4b4; }
.crumbs a { color: inherit; text-decoration: none; }
.crumbs svg { width: 10px; height: 10px; margin: 0 4px; color: #858585; }
.file { display: flex; align-items: center; height: 16px; padding-left: 16px; gap: 4px; background: #3e7de7; color: #fff; }
.file svg { color: #fff; }
.path { margin-top: auto; display: flex; align-items: center; height: 21px; padding: 0 16px 0 4px; gap: 2px; background: #cecece; border-top: 1px solid #b0b0b0; }
.path span { flex: 1; }
.path input { appearance: none; width: 55px; height: 10px; background: linear-gradient(#8a8a8a, #8a8a8a) center / 100% 2px no-repeat; }
.path input::-webkit-slider-thumb { appearance: none; width: 10px; height: 10px; border-radius: 5px; background: #606060; }

.asset-head { flex: none; height: 53px; display: flex; padding: 7px 3px 0 7px; gap: 5px; background: #cbcbcb; border-bottom: 1px solid #858585; }
.asset-head h2 { flex: 1; margin-left: 6px; font-size: 13px; color: #222; }
.asset-head svg { width: 11px; height: 11px; }
.asset-head .big { width: 28px; height: 30px; }
.open-area { flex: none; height: 104px; padding: 9px 4px; }
.wide { display: block; width: 229px; height: 23px; margin: 0 auto; background: #e4e4e4; border: 1px solid #b0b0b0; border-bottom-color: #999; border-radius: 3px; }
.help-box { height: 38px; margin-top: 8px; display: flex; align-items: center; gap: 1px; padding-left: 4px; border: 1px solid #aaa; border-radius: 3px; background: #c8c8c8; font-size: 10px; color: #222; }
.help-box svg { width: 32px; height: 32px; }
.root-line { flex: none; height: 28px; padding: 5px 4px; background: #cbcbcb; border: 1px solid #858585; border-width: 1px 0; }
.object-head { flex: none; height: 59px; display: flex; padding: 9px 3px 0 7px; background: #cbcbcb; }
.object-icon { width: 32px; padding-top: 1px; }
.object-icon svg { display: block; width: 21px; height: 22px; }
.object-icon .down { display: block; width: 8px; margin-left: 19px; }
.object-fields { flex: 1; min-width: 0; }
.name-row { display: flex; align-items: center; gap: 4px; height: 18px; padding: 0 2px 0 6px; }
.name-row input[type=checkbox] { appearance: none; flex: none; width: 14px; height: 14px; border: 1px solid #b0b0b0; border-radius: 2px; background: #f0f0f0; }
.name-row input:checked { display: grid; place-items: center; }
.name-row input:checked::after { content: ""; width: 5px; height: 9px; border: solid #333; border-width: 0 2px 2px 0; transform: rotate(45deg); margin-bottom: 2px; }
.name { flex: 1; height: 18px; margin-left: 2px; padding: 0 3px; background: #d8d8d8; border: 1px solid #c0c0c0; border-radius: 3px; color: #777; font-weight: 600; }
.tag-row { display: flex; align-items: center; gap: 4px; margin-top: 6px; padding-left: 3px; }
.layer-label { margin-left: 10px; }
.select { flex: 133 1 0; display: grid; align-items: center; min-width: 0; }
.tag-select { flex-grow: 143; }
.select select, .select::after { grid-area: 1 / 1; }
.select select { appearance: none; width: 100%; height: 18px; padding: 0 3px; border: 1px solid #aaa; border-radius: 3px; background: #dfdfdf; }
.select::after { content: ""; justify-self: end; margin-right: 5px; border: 4px solid transparent; border-top: 5px solid #505050; border-bottom: 0; pointer-events: none; }
.component-head { flex: none; height: 22px; display: flex; align-items: center; gap: 9px; padding: 1px 7px 0 5px; background: #cbcbcb; border-top: 1px solid #858585; border-bottom: 1px solid #bababa; }
.component-head svg { width: 11px; height: 11px; }
.component-head svg:last-child { width: 12px; height: 12px; }
.component-head .component-icon { width: 14px; height: 14px; margin-left: -3px; }
.component-head b { flex: 1; margin-left: 16px; }
.fields { flex: none; padding: 4px 4px 0 19px; }
.transform { height: 73px; }
.renderer { height: 109px; }
.row { display: grid; grid-template-columns: minmax(0, 142fr) minmax(0, 233fr); height: 18px; margin-bottom: 2px; align-items: center; }
.row span, .row label { padding-top: 1px; }
.rotation { margin-top: 4px; }
.vector { display: grid; grid-template-columns: 12px 1fr 18px 1fr 18px 1fr; align-items: center; }
.vector label:not(:first-child) { padding-left: 6px; }
.row input { height: 18px; padding: 1px 2px 0; border: 1px solid #b4b4b4; border-radius: 3px; background: #f0f0f0; }
.object { display: flex; align-items: center; height: 18px; padding: 1px 0 0 2px; gap: 2px; border: 1px solid #b4b4b4; border-radius: 3px; background: #ededed; }
.object svg { width: 11px; height: 11px; }
.object button { width: 18px; height: 16px; margin-left: auto; display: grid; place-items: center; background: #dedede; }
.object button svg { width: 13px; height: 13px; }
.off { opacity: .5; }
.row.inner > :first-child { padding-left: 15px; }
.fold span { display: flex; align-items: center; margin-left: -12px; gap: 2px; }
.add-area { flex: 1; border-top: 1px solid #858585; padding-top: 8px; }
.labels { flex: none; height: 22px; padding: 3px 7px 0; background: #cbcbcb; border: 1px solid #999; border-width: 1px 0; font-weight: 600; }
.status { flex: none; height: 20px; padding: 4px 31px 0 0; text-align: right; line-height: 16px; }
.desktop-edge { flex: none; height: 2px; background: #e6e6e6; }
```
